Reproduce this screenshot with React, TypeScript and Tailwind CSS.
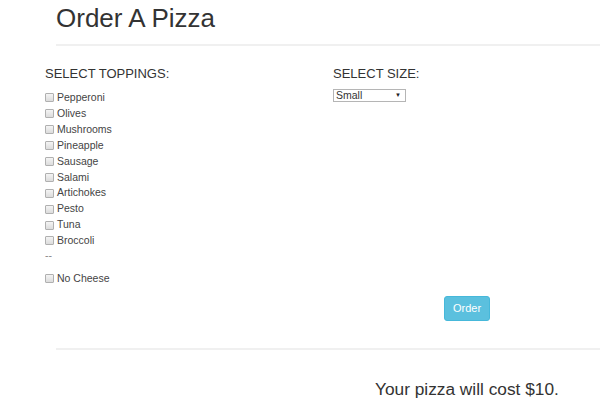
const toppings = [
  "Pepperoni",
  "Olives",
  "Mushrooms",
  "Pineapple",
  "Sausage",
  "Salami",
  "Artichokes",
  "Pesto",
  "Tuna",
  "Broccoli",
];

const Box = () => (
  <span className="inline-block w-[9px] h-[9px] border border-[#b0b0b0] rounded-[1px] bg-gradient-to-b from-[#f4f4f4] to-[#dcdcdc] mr-[3px]" />
);

const Row = ({ label }: { label: string }) => (
  <div className="flex items-center h-[15.9px]">
    <Box />
    <span>{label}</span>
  </div>
);

export default function App() {
  return (
    <div
      className="w-[600px] h-[400px] bg-white text-[#333] overflow-hidden"
      style={{ fontFamily: '"Liberation Sans", Arial, sans-serif' }}
    >
      {/* Header */}
      <div className="pl-[56px] pt-[3px]">
        <h1 className="text-[26px] leading-[30px]">Order A Pizza</h1>
        <div className="mt-[11px] h-[2px] bg-[#f0f0f0]" />
      </div>

      {/* Form */}
      <div className="flex pl-[45px] pt-[20px]">
        <div className="w-[288px]">
          <div className="text-[13px] leading-[16px]">SELECT TOPPINGS:</div>
          <div className="mt-[8px] text-[10.5px] text-[#444]">
            {toppings.map((t) => (
              <Row key={t} label={t} />
            ))}
            <div className="h-[14px] leading-[12px] text-[#888]">--</div>
            <div className="mt-[8px]">
              <Row label="No Cheese" />
            </div>
          </div>
        </div>
        <div>
          <div className="text-[13px] leading-[16px]">SELECT SIZE:</div>
          <div className="mt-[7px] w-[73px] h-[13px] border border-[#b5b5b5] flex items-center justify-between pl-[2px] pr-[4px] text-[10.5px] text-[#333]">
            <span>Small</span>
            <span className="text-[6px] text-[#222]">▼</span>
          </div>
        </div>
      </div>

      {/* Order */}
      <div className="pl-[444px] mt-[8px]">
        <button className="w-[46px] h-[25px] rounded-[3px] bg-[#5bc0de] border border-[#46b8da] text-white text-[11px]">
          Order
        </button>
      </div>

      <div className="ml-[56px] mt-[27px] h-[2px] bg-[#f0f0f0]" />

      <div className="pl-[375px] mt-[29px] text-[17.3px] leading-[20px]">
        Your pizza will cost $10.
      </div>
    </div>
  );
}
